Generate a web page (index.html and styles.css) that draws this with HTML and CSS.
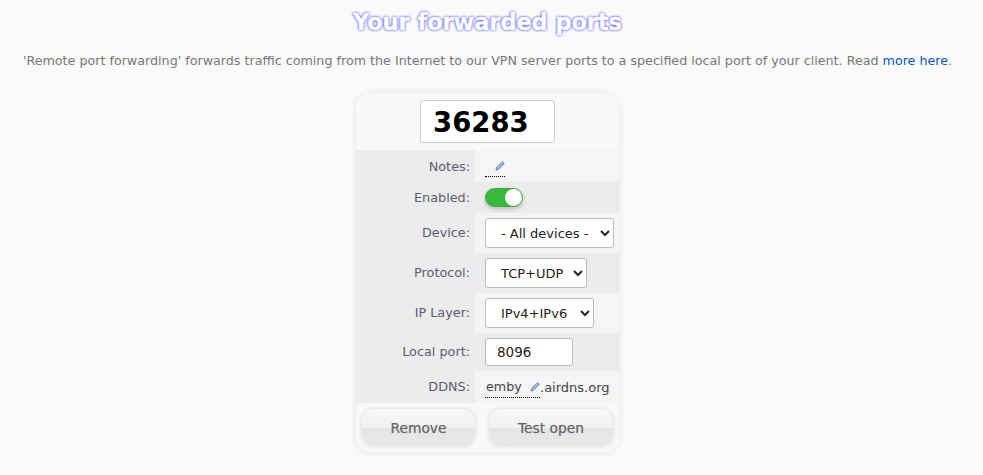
FILE: index.html
```html
<!DOCTYPE html>
<html lang="en">
  <head>
    <meta charset="UTF-8" />
    <meta name="viewport" content="width=device-width, initial-scale=1.0" />
    <title>Your forwarded ports</title>
    <link rel="stylesheet" href="styles.css">
  </head>
  <body>
    <h1 class="page-title">Your forwarded ports</h1>
    <p class="intro">
      'Remote port forwarding' forwards traffic coming from the Internet to our VPN server ports to a specified local port of your client. Read <a href="#">more here</a>.
    </p>

    <div class="port-card">
      <div class="port-head">
        <input class="port-number" type="text" value="36283" />
      </div>

      <div class="row row-notes">
        <div class="label">Notes:</div>
        <div class="value">
          <span class="editable">
            <svg class="pencil" viewBox="0 0 10 10"><path d="M1 9 L1.6 6.6 L6.8 1.4 Q7.6 .7 8.4 1.4 L8.7 1.7 Q9.3 2.5 8.6 3.2 L3.4 8.4 Z" fill="#a9bde0" stroke="#4a6aa8" stroke-width=".8"/></svg>
          </span>
        </div>
      </div>

      <div class="row row-enabled alt">
        <div class="label">Enabled:</div>
        <div class="value">
          <span class="switch"><span class="knob"></span></span>
        </div>
      </div>

      <div class="row row-select">
        <div class="label">Device:</div>
        <div class="value">
          <select class="field field-device"><option>- All devices -</option></select>
        </div>
      </div>

      <div class="row row-select alt">
        <div class="label">Protocol:</div>
        <div class="value">
          <select class="field field-protocol"><option>TCP+UDP</option></select>
        </div>
      </div>

      <div class="row row-select">
        <div class="label">IP Layer:</div>
        <div class="value">
          <select class="field field-layer"><option>IPv4+IPv6</option></select>
        </div>
      </div>

      <div class="row row-local alt">
        <div class="label">Local port:</div>
        <div class="value">
          <input class="field local-port" type="text" value="8096" />
        </div>
      </div>

      <div class="row row-ddns">
        <div class="label">DDNS:</div>
        <div class="value">
          <span class="editable ddns-name">emby
            <svg class="pencil" viewBox="0 0 10 10"><path d="M1 9 L1.6 6.6 L6.8 1.4 Q7.6 .7 8.4 1.4 L8.7 1.7 Q9.3 2.5 8.6 3.2 L3.4 8.4 Z" fill="#a9bde0" stroke="#4a6aa8" stroke-width=".8"/></svg>
          </span><span class="ddns-domain">.airdns.org</span>
        </div>
      </div>

      <div class="actions">
        <button class="btn btn-remove">Remove</button>
        <button class="btn btn-test">Test open</button>
      </div>
    </div>
  </body>
</html>
```

FILE: styles.css
```css
* {
  box-sizing: border-box;
}

body {
  margin: 0;
  padding-right: 8px;
  height: 475px;
  overflow: hidden;
  background: #fafafa;
  color: #444;
  font-family: "DejaVu Sans", Verdana, sans-serif;
  font-size: 12.7px;
}

.page-title {
  margin: 0;
  padding-top: 9px;
  height: 45px;
  text-align: center;
  font-size: 22.4px;
  line-height: 26px;
  font-weight: bold;
  color: #fff;
  -webkit-text-stroke: 0.4px #fff;
  text-shadow: 0 0 2px #4a4ae8, 0 0 3px #5a5ae0, 0 0 1px #6a6af0;
}

.intro {
  margin: 7px 0 0;
  text-align: center;
  line-height: 18px;
  color: #777;
}

.intro a {
  color: #0b57c0;
  text-decoration: none;
}

.port-card {
  width: 263px;
  height: 359px;
  margin: 23px auto 0;
  border-radius: 15px;
  background: #f9f9f9;
  box-shadow: 0 0 8px rgba(0, 0, 0, 0.08);
  overflow: hidden;
}

.port-head {
  height: 57px;
  display: flex;
  justify-content: center;
  align-items: center;
}

.port-number {
  width: 135px;
  height: 43px;
  padding: 0 12px;
  border: 1px solid #ccc;
  border-radius: 3px;
  background: #fff;
  color: #000;
  font-family: inherit;
  font-size: 27.5px;
  font-weight: bold;
}

.row {
  display: flex;
  height: 40px;
  background: #ececec;
}

.row-notes {
  height: 32px;
}

.row-enabled {
  height: 31px;
}

.row-local {
  height: 38px;
}

.row-ddns {
  height: 32px;
}

.label {
  width: 119px;
  padding-right: 5px;
  display: flex;
  justify-content: flex-end;
  align-items: center;
  color: #5c5c70;
  font-size: 12.8px;
}

.row-select .label,
.row-local .label,
.row-ddns .label {
  padding-bottom: 2px;
}

.value {
  flex: 1;
  padding-left: 10px;
  display: flex;
  align-items: center;
  background: #f5f5f5;
  color: #444;
}

.alt .value {
  background: #ececec;
}

.editable {
  display: inline-flex;
  align-items: center;
  justify-content: flex-end;
  width: 20px;
  height: 21px;
  padding-right: 0;
  border-bottom: 1px dotted #000;
}

.ddns-name {
  width: 55px;
  justify-content: space-between;
  padding-left: 1px;
}

.ddns-domain {
  font-size: 13px;
}

.pencil {
  width: 10px;
  height: 10px;
}

.switch {
  position: relative;
  display: block;
  width: 38px;
  height: 19px;
  border-radius: 10px;
  background: #39b83c;
  border: 1px solid #4a9e4c;
  box-shadow: 0 2px 4px rgba(0, 0, 0, 0.2);
}

.knob {
  position: absolute;
  top: 0;
  right: 0;
  width: 17px;
  height: 17px;
  border-radius: 50%;
  background: #fff;
}

.field {
  height: 30px;
  border: 1px solid #bbb;
  border-radius: 3px;
  background: #fff;
  color: #222;
  font-family: inherit;
  font-size: 13px;
  padding: 0 0 0 11px;
}

.field-device {
  width: 129px;
}

.field-protocol {
  width: 102px;
}

.field-layer {
  width: 109px;
}

.local-port {
  width: 88px;
  height: 28px;
  padding-left: 11px;
  font-size: 13.5px;
}

.actions {
  height: 49px;
  padding: 6px 6px 0;
  display: flex;
  justify-content: space-between;
}

.btn {
  height: 37px;
  border: none;
  border-radius: 12px;
  background: linear-gradient(#f7f7f7 0, #f2f2f2 50%, #e6e6e6 50%, #e8e8e8 100%);
  box-shadow: 0 0 4px rgba(0, 0, 0, 0.15);
  color: #666;
  font-family: inherit;
  font-size: 13.8px;
  text-shadow: 0 0 1px #aaa;
}

.btn-remove {
  width: 113px;
}

.btn-test {
  width: 124px;
}
```
